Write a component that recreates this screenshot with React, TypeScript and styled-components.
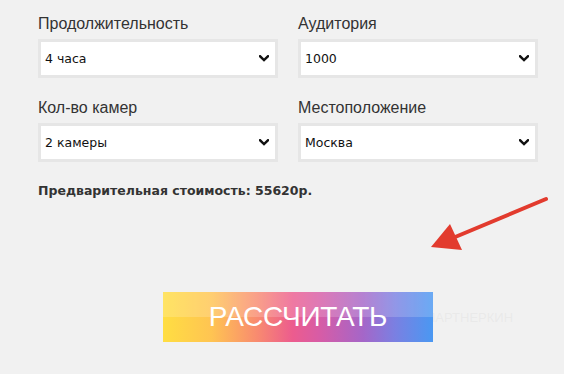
import React from 'react'
import styled, { createGlobalStyle } from 'styled-components'

const GlobalStyle = createGlobalStyle`
  body {
    margin: 0;
    background: #f1f1f1;
    font-family: 'Liberation Sans', Arial, sans-serif;
  }
`

interface Field {
  label: string
  value: string
  options: string[]
}

const fields: Field[] = [
  { label: 'Продолжительность', value: '4 часа', options: ['2 часа', '4 часа', '8 часов'] },
  { label: 'Аудитория', value: '1000', options: ['500', '1000', '5000'] },
  { label: 'Кол-во камер', value: '2 камеры', options: ['1 камера', '2 камеры', '3 камеры'] },
  { label: 'Местоположение', value: 'Москва', options: ['Москва', 'Санкт-Петербург'] },
]

function Chevron() {
  return (
    <ChevronIcon width="10" height="7" viewBox="0 0 10 7">
      <path d="M1 1.2 L5 5 L9 1.2" fill="none" stroke="#111" strokeWidth="2.4" strokeLinecap="square" />
    </ChevronIcon>
  )
}

function Arrow() {
  return (
    <ArrowSvg width="564" height="374" viewBox="0 0 564 374">
      <line x1="546" y1="199" x2="448" y2="240" stroke="#e23b2e" strokeWidth="4" strokeLinecap="round" />
      <polygon points="431,247 450,224 462,250" fill="#e23b2e" />
    </ArrowSvg>
  )
}

export default function App() {
  return (
    <Page>
      <GlobalStyle />
      <Form>
        {fields.map((f) => (
          <FieldBox key={f.label}>
            <Label>{f.label}</Label>
            <SelectWrap>
              <Select defaultValue={f.value}>
                {f.options.map((o) => (
                  <option key={o}>{o}</option>
                ))}
              </Select>
              <Chevron />
            </SelectWrap>
          </FieldBox>
        ))}
      </Form>
      <Cost>Предварительная стоимость: 55620р.</Cost>
      <ButtonRow>
        <CalcButton>РАССЧИТАТЬ</CalcButton>
        <Watermark>
          <svg width="20" height="16" viewBox="0 0 20 16">
            <rect x="1" y="1" width="18" height="12" fill="none" stroke="currentColor" strokeWidth="1.5" />
            <path d="M8 13 L10 16 L12 13" fill="none" stroke="currentColor" strokeWidth="1.5" />
          </svg>
          ПАРТНЕРКИН
        </Watermark>
      </ButtonRow>
      <Arrow />
    </Page>
  )
}

const Page = styled.div`
  position: relative;
  width: 564px;
  height: 374px;
  padding: 15px 0 0 38px;
  box-sizing: border-box;
  overflow: hidden;
`

const Form = styled.div`
  display: grid;
  grid-template-columns: 240px 240px;
  column-gap: 20px;
  row-gap: 21px;
`

const FieldBox = styled.div`
  display: flex;
  flex-direction: column;
  gap: 6px;
`

const Label = styled.div`
  font-size: 16px;
  line-height: 18px;
  color: #333;
`

const SelectWrap = styled.div`
  position: relative;
  height: 39px;
`

const Select = styled.select`
  appearance: none;
  width: 100%;
  height: 100%;
  box-sizing: border-box;
  border: 3px solid #e6e6e6;
  border-radius: 0;
  background: #fff;
  padding: 0 0 0 4px;
  font-family: 'DejaVu Sans', Tahoma, sans-serif;
  font-size: 12.5px;
  color: #111;
  outline: none;
`

const ChevronIcon = styled.svg`
  position: absolute;
  right: 9px;
  top: 16px;
  pointer-events: none;
`

const Cost = styled.div`
  margin-top: 21px;
  font-family: 'DejaVu Sans', Tahoma, sans-serif;
  font-size: 12.5px;
  font-weight: 700;
  line-height: 15px;
  color: #333;
`

const ButtonRow = styled.div`
  display: flex;
  align-items: center;
  margin-top: 94px;
  padding-left: 125px;
`

const CalcButton = styled.button`
  position: relative;
  width: 270px;
  height: 50px;
  border: none;
  padding: 0;
  cursor: pointer;
  color: #fff;
  font-family: 'Liberation Sans', Arial, sans-serif;
  font-size: 28px;
  letter-spacing: -0.3px;
  background: linear-gradient(
    90deg,
    #ffde42 0%,
    #ffc452 18%,
    #f88a70 35%,
    #ec5c8e 48%,
    #d75ca6 58%,
    #a566c8 74%,
    #7a80e2 86%,
    #4a98f2 100%
  );
  &::before {
    content: '';
    position: absolute;
    left: 0;
    right: 0;
    top: 0;
    height: 50%;
    background: rgba(255, 255, 255, 0.18);
  }
`

const Watermark = styled.div`
  display: flex;
  align-items: center;
  gap: 4px;
  margin-left: -31px;
  font-family: 'Liberation Sans', Arial, sans-serif;
  font-size: 13px;
  color: rgba(215, 215, 215, 0.3);
  pointer-events: none;
`

const ArrowSvg = styled.svg`
  position: absolute;
  left: 0;
  top: 0;
  pointer-events: none;
`
